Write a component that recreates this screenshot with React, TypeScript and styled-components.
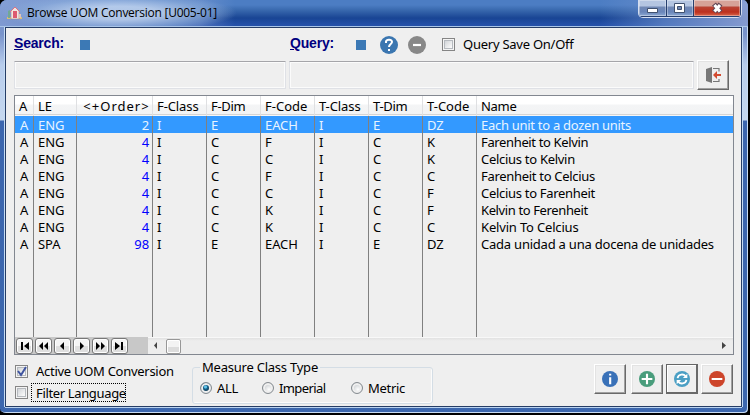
import React from "react";
import styled, { createGlobalStyle, css } from "styled-components";

const Global = createGlobalStyle`
  *, *::before, *::after { box-sizing: border-box; }
  html, body { margin: 0; background: #000; overflow: hidden; }
  body { font: 13px/17px "Noto Sans", "Open Sans", sans-serif; color: #000; }
  svg { display: block; flex: none; }
`;

const Window = styled.main`
  width: 750px;
  height: 415px;
  padding: 0 8px 8px 5px;
  overflow: hidden;
  border-radius: 7px 7px 6px 6px;
  border-right: 2px solid #000;
  border-bottom: 2px solid #000;
  box-shadow: inset -1px -1px 0 #c9dcf3;
  background:
    linear-gradient(180deg, #7f9bd0 0, #7893cb 34px, #b8cdec 65px, #c6d8ef 120px, #3c66ae 121px, #3c67ae 100%);
  display: flex;
  flex-direction: column;
`;

const TitleBar = styled.header`
  height: 27px;
  margin: 0 -8px 0 -5px;
  padding-left: 7px;
  flex: none;
  display: flex;
  border-bottom: 1px solid #a9c5e8;
  background:
    radial-gradient(ellipse 118px 19px at 119px 13px, rgba(196,215,241,.8) 0 35%, rgba(143,177,222,.5) 76%, transparent),
    linear-gradient(90deg, rgba(137,162,214,.9), rgba(137,162,214,.4) 200px, transparent 235px 600px, rgba(110,145,205,.65) 665px, rgba(143,163,213,.9)),
    linear-gradient(180deg, #4c7dc3 0 5px, #3969ae 10px, #194594 18px, #2450a9 25px);
`;
const Title = styled.h1`
  font: 12px/16px "Open Sans", sans-serif;
  letter-spacing: -.25px;
  margin: 5px 0 0 5px;
  width: 598px;
  flex: none;
  white-space: nowrap;
`;
const HouseIcon = styled.svg`margin-top: 5px; width: 15px; height: 16px;`;
const Captions = styled.div`
  width: 104px;
  height: 18px;
  margin-left: 13px;
  display: flex;
  border: 1px solid #d5def0;
  border-top: 0;
  border-radius: 0 0 5px 5px;
  overflow: hidden;
  box-shadow: inset 0 0 0 1px #263f6e;
`;
const CaptionButton = styled.button<{ $width: number; $close?: boolean }>`
  width: ${p => p.$width}px;
  border: 0;
  border-right: 1px solid #263f6e;
  border-bottom: 1px solid #263f6e;
  padding: 0;
  display: grid;
  place-items: center;
  box-shadow: inset 0 0 0 1px rgba(255,255,255,.35);
  background: ${p => p.$close
    ? "linear-gradient(#d6a298 0 6px, #b94435 7px, #bd301e 12px, #d8664b)"
    : "linear-gradient(#b4c5e1 0 6px, #7188b4 7px, #6986ba 12px, #8eaad3)"};
`;

const Content = styled.section`
  width: 737px;
  height: 380px;
  flex: none;
  background: #efefef;
  border: 1px solid #263d66;
  box-shadow: -1px 0 0 #c6dcf4, 1px 0 0 #c6dcf4, 0 1px 0 #bad3f0;
  padding-left: 8px;
`;
const Tools = styled.div`
  height: 33px;
  display: flex;
  align-items: center;
`;
const Accent = styled.label<{ $w: number }>`
  width: ${p => p.$w}px;
  padding-bottom: 2px;
  font: bold 14px/17px "Liberation Sans", Arial, sans-serif;
  color: #000080;
  letter-spacing: -.2px;
`;
const Mark = styled.i<{ $after: number }>`
  width: 10px;
  height: 10px;
  background: #3c79b5;
  margin-right: ${p => p.$after}px;
`;
const Label = styled.span<{ $spacing?: number }>`
  letter-spacing: ${p => p.$spacing ?? 0}px;
  white-space: nowrap;
`;
const QueryIcons = styled.div`display: flex; gap: 10px; margin-right: 16px;`;
const SaveOption = styled.label`display: flex; align-items: center; gap: 8px;`;
const Entries = styled.div`display: flex; align-items: center; height: 30px; margin-top: -1px;`;
const Entry = styled.div<{ $w: number; $gap: number }>`
  width: ${p => p.$w}px;
  height: 28px;
  margin-right: ${p => p.$gap}px;
  border: 1px solid #dfe1e6;
  border-top-color: #a5a5a9;
  border-radius: 1px;
  box-shadow: inset 0 0 0 1px #fbfbfb;
`;
const PushButton = styled.button<{ $focused?: boolean }>`
  width: 32px;
  height: 30px;
  padding: 0;
  background: #efefef;
  border: 1px solid ${p => (p.$focused ? "#666" : "#fff")};
  border-right-color: #696969;
  border-bottom-color: #696969;
  box-shadow: inset -1px -1px 0 ${p => (p.$focused ? "#696969" : "#a0a0a0")}, inset 1px 1px 0 ${p => (p.$focused ? "#fff" : "#e3e3e3")};
  display: grid;
  place-items: center;
`;

const TablePanel = styled.section`
  width: 720px;
  height: 260px;
  margin-top: 5px;
  border: 1px solid #828790;
`;
const columns = "19px 43px 76px repeat(6, 54px) 257px";
const cellLines = css`
  display: grid;
  grid-template-columns: ${columns};
`;
const TableHeader = styled.div`
  ${cellLines}
  height: 20px;
  background: linear-gradient(#fff 0 8px, #f4f5f6 9px, #f2f3f4 18px, #d5d5d5 18px 19px, #f6f6f6 19px);
`;
const HeaderCell = styled.div<{ $center?: boolean; $spacing?: number }>`
  border-right: 1px solid #dfe0e2;
  padding: 2px 0 0 4px;
  letter-spacing: ${p => p.$spacing ?? 0}px;
  text-align: ${p => p.$center ? "center" : "left"};
  white-space: nowrap;
  &:last-child { border: 0; }
`;
const Rows = styled.div`
  height: 221px;
  background: #efefef;
`;
const Row = styled.div<{ $selected?: boolean }>`
  ${cellLines}
  height: 17px;
  background: ${p => p.$selected ? "#3399ff" : "transparent"};
  color: ${p => p.$selected ? "#e8f4ff" : "#000"};
`;
const Cell = styled.div<{ $kind?: "first" | "number"; $selected?: boolean; $spacing?: number }>`
  border-right: 1px solid #808080;
  padding: 1px 4px 0;
  height: 100%;
  line-height: 17px;
  letter-spacing: ${p => p.$spacing ?? -.1}px;
  white-space: nowrap;
  ${p => p.$kind === "first" && css`padding-left: 5px;`}
  ${p => p.$kind === "number" && css`text-align: right; padding-right: 3px; color: ${p.$selected ? "#e8f4ff" : "#0000ff"};`}
  &:last-child { border: 0; }
`;
const EmptyRows = styled.div`
  ${cellLines}
  height: 85px;
`;
const FooterBar = styled.div`
  height: 17px;
  display: flex;
  background: #ededed;
`;
const Navigator = styled.div`
  width: 133px;
  height: 17px;
  padding: 1px;
  display: flex;
  gap: 2px;
  background: #c8c8c8;
  flex: none;
`;
const NavButton = styled.button`
  width: 17px;
  height: 16px;
  padding: 0;
  border: 1px solid #777;
  border-radius: 3px;
  box-shadow: inset 0 0 0 1px #fff;
  background: linear-gradient(#f4f4f4 50%, #dedede 51%);
  display: grid;
  place-items: center;
`;
const Scroll = styled.div`
  flex: 1;
  display: flex;
  align-items: center;
  padding: 0 6px 0 5px;
  border-top: 1px solid #f8f8f8;
  background: linear-gradient(#e2e2e2, #ededed 3px, #ededed);
`;
const Thumb = styled.i`
  width: 15px;
  height: 15px;
  border: 1px solid #979797;
  border-radius: 2px;
  box-shadow: inset 0 0 0 1px #fff;
  background: linear-gradient(#f3f3f3 50%, #dcdcdc 51%);
  margin: 0 auto 0 8px;
`;
const Bottom = styled.footer`
  height: 49px;
  display: grid;
  grid-template-columns: 178px 240px 162px auto;
`;
const CheckStack = styled.div`padding: 6px 0 0 1px;`;
const CheckLine = styled.label`
  height: 21px;
  display: flex;
  align-items: center;
`;
const Box = styled.span`
  width: 13px;
  height: 13px;
  flex: none;
  border: 1px solid #858585;
  background: linear-gradient(135deg, #c5c9ce, #f9f9f9 75%);
  box-shadow: inset 0 0 0 1px #f4f4f4, inset 0 0 0 2px #b6babf;
`;
const Caption = styled.span<{ $focused?: boolean }>`
  margin-left: ${p => p.$focused ? 3 : 8}px;
  height: 19px;
  width: ${p => p.$focused ? 95 : 145}px;
  padding-left: ${p => p.$focused ? 4 : 0}px;
  border: ${p => p.$focused ? "1px dotted #000" : "0"};
  line-height: ${p => p.$focused ? 18 : 19}px;
  letter-spacing: ${p => p.$focused ? -.35 : -.28}px;
  white-space: nowrap;
`;
const Group = styled.fieldset`
  width: 241px;
  height: 43px;
  margin: 6px 0 0;
  padding: 0;
  min-width: 0;
  border: 1px solid #d4dde5;
  border-radius: 3px;
  box-shadow: inset -1px -1px 0 #fbfbfb;
`;
const Legend = styled.legend`
  margin-left: 7px;
  padding: 0 2px;
  line-height: 13px;
  height: 13px;
  letter-spacing: -.23px;
  white-space: nowrap;
`;
const Options = styled.div`
  display: grid;
  grid-template-columns: 62px 89px 80px;
  padding-left: 7px;
  margin-top: 5px;
`;
const Option = styled.label<{ $spacing: number }>`
  display: flex;
  align-items: center;
  height: 18px;
  letter-spacing: ${p => p.$spacing}px;
`;
const Radio = styled.i<{ $on?: boolean }>`
  width: 12px;
  height: 12px;
  margin-right: 5px;
  border: 1px solid #858b90;
  border-radius: 50%;
  box-shadow: inset 0 0 0 2px #efefef;
  background: ${p => p.$on
    ? "radial-gradient(circle at 45% 40%, #65c5ea 0 1px, #16648e 2px, #123d58 4px, #c5d4df 5px)"
    : "radial-gradient(circle at 60% 65%, #fff, #aeb4b9)"};
`;
const Actions = styled.div`display: flex; padding-top: 9px; > :nth-child(2) { margin-left: 5px; } > :nth-child(n+3) { margin-left: 3px; }`;

const headers = [
  { text: "A", spacing: 0 }, { text: "LE", spacing: 0 }, { text: "<+Order>", spacing: 1 },
  { text: "F-Class", spacing: -.1 }, { text: "F-Dim", spacing: -.3 }, { text: "F-Code", spacing: 0 },
  { text: "T-Class", spacing: -.1 }, { text: "T-Dim", spacing: -.3 }, { text: "T-Code", spacing: 0 }, { text: "Name", spacing: -.3 },
];
const records = [
  ["A", "ENG", "2", "I", "E", "EACH", "I", "E", "DZ", "Each unit to a dozen units"],
  ["A", "ENG", "4", "I", "C", "F", "I", "C", "K", "Farenheit to Kelvin"],
  ["A", "ENG", "4", "I", "C", "C", "I", "C", "K", "Celcius to Kelvin"],
  ["A", "ENG", "4", "I", "C", "F", "I", "C", "C", "Farenheit to Celcius"],
  ["A", "ENG", "4", "I", "C", "C", "I", "C", "F", "Celcius to Farenheit"],
  ["A", "ENG", "4", "I", "C", "K", "I", "C", "F", "Kelvin to Ferenheit"],
  ["A", "ENG", "4", "I", "C", "K", "I", "C", "C", "Kelvin To Celcius"],
  ["A", "SPA", "98", "I", "E", "EACH", "I", "E", "DZ", "Cada unidad a una docena de unidades"],
];
const nameSpacing = [-.28, -.36, -.29, -.3, -.3, -.38, -.17, -.22];
const navPaths = [
  "M2 1h2v8H2zM10 1v8L5 5z",
  "M5 1v8L1 5zM10 1v8L6 5z",
  "M7 1v8L3 5z",
  "M4 1v8l4-4z",
  "M1 1v8l4-4zM6 1v8l4-4z",
  "M1 1v8l5-4zM7 1h2v8H7z",
];

function RoundIcon({ kind }: { kind: "info" | "plus" | "refresh" | "minus" | "help" | "disabled" }) {
  const fills = { info: "#3971b8", plus: "#499d7c", refresh: "#4b9fc4", minus: "#cd452b", help: "#3b76b0", disabled: "#888" };
  const size = kind === "help" || kind === "disabled" ? 18 : 16;
  return (
    <svg width={size} height={size} viewBox="0 0 18 18">
      <circle cx="9" cy="9" r="9" fill={fills[kind]} />
      {kind === "info" && <path d="M8 3h2.4v2H8zM8 7h2.4v8H8z" fill="#fff" />}
      {kind === "plus" && <path d="M9 3v12M3 9h12" stroke="#fff" strokeWidth="2.4" />}
      {(kind === "minus" || kind === "disabled") && <path d={kind === "minus" ? "M3 9h12" : "M5 9h8"} stroke="#fff" strokeWidth="2.2" />}
      {kind === "help" && <path d="M6 7V5.5C6.5 3 12 3 12 6c0 2-3 2-3 5M9 13v2" stroke="#fff" strokeWidth="2" fill="none" />}
      {kind === "refresh" && <><path d="M4 8c1-5 7-5 9-2M14 10c-1 5-7 5-9 2" stroke="#fff" strokeWidth="2" fill="none" /><path d="M15 3v5h-5zM3 15v-5h5z" fill="#fff" /></>}
    </svg>
  );
}

export default function App() {
  return <><Global /><Window>
    <TitleBar>
      <HouseIcon viewBox="0 0 15 16">
        <path d="M0 12h15v2H0z" fill="#d8bd73" /><path d="M1 6l2-1v8H1z" fill="#71a895" />
        <path d="M4 6l4-4 4 4v8H4z" fill="#f2e4df" stroke="#98747d" strokeWidth=".5" />
        <path d="M3 7l5-5 5 5" fill="none" stroke="#df7080" /><path d="M6 6h4v7H6z" fill="#dc5870" /><path d="M12 9h2v4h-2z" fill="#e0c3b7" />
      </HouseIcon>
      <Title>Browse UOM Conversion [U005-01]</Title>
      <Captions>
        <CaptionButton $width={28}><svg width="13" height="12"><path d="M1.5 6.5h10v4h-10z" fill="#fff" stroke="#40516f" /></svg></CaptionButton>
        <CaptionButton $width={27}><svg width="12" height="12"><path d="M.5 1.5h10v9H.5z" fill="#fff" stroke="#40516f" /><path d="M3.5 4.5h4v3h-4z" fill="#7188b4" stroke="#40516f" /></svg></CaptionButton>
        <CaptionButton $width={47} $close><svg width="13" height="12"><path d="M3 2l6.5 8M9.5 2L3 10" stroke="#634755" strokeWidth="5" /><path d="M3.5 3l5.5 6.5M9 3L3.5 9.5" stroke="#fff" strokeWidth="3" /></svg></CaptionButton>
      </Captions>
    </TitleBar>
    <Content>
      <Tools>
        <Accent $w={66}><u>S</u>earch:</Accent><Mark $after={200} />
        <Accent $w={66}><u>Q</u>uery:</Accent><Mark $after={14} />
        <QueryIcons><RoundIcon kind="help" /><RoundIcon kind="disabled" /></QueryIcons>
        <SaveOption><Box /><Label $spacing={-.25}>Query Save On/Off</Label></SaveOption>
      </Tools>
      <Entries><Entry $w={272} $gap={3} /><Entry $w={405} $gap={3} />
        <PushButton aria-label="Exit"><svg width="17" height="17" viewBox="0 0 17 17"><path d="M1 2l6-2v16l-6-2z" fill="#777" /><path d="M8 1.5h6v3M14 12v2.5H8" fill="none" stroke="#777" strokeWidth="1.2" /><path d="M8 8l4-4v3h4v2h-4v3z" fill="#d34a30" /></svg></PushButton>
      </Entries>
      <TablePanel>
        <TableHeader>{headers.map((h, i) => <HeaderCell key={h.text} $center={i === 2} $spacing={h.spacing}>{h.text}</HeaderCell>)}</TableHeader>
        <Rows>
          {records.map((r, row) => <Row key={row} $selected={row === 0}>{r.map((v, i) => <Cell key={i} $selected={row === 0} $spacing={i === 9 ? nameSpacing[row] : undefined} $kind={i === 0 ? "first" : i === 2 ? "number" : undefined}>{v}</Cell>)}</Row>)}
          <EmptyRows>{headers.map(h => <Cell key={h.text} />)}</EmptyRows>
        </Rows>
        <FooterBar><Navigator>{navPaths.map(d => <NavButton key={d}><svg width="11" height="10"><path d={d} /></svg></NavButton>)}</Navigator>
          <Scroll><svg width="5" height="8"><path d="M4 0v7L1 3.5z" fill="#444" /></svg><Thumb /><svg width="5" height="8"><path d="M0 0v7l4-3.5z" fill="#444" /></svg></Scroll>
        </FooterBar>
      </TablePanel>
      <Bottom>
        <CheckStack>
          <CheckLine><Box><svg width="11" height="11"><path d="M2 5l3 4 5-8" fill="none" stroke="#4055a0" strokeWidth="2" /></svg></Box><Caption>Active UOM Conversion</Caption></CheckLine>
          <CheckLine><Box /><Caption $focused>Filter Language</Caption></CheckLine>
        </CheckStack>
        <Group><Legend>Measure Class Type</Legend><Options>
          <Option $spacing={-.3}><Radio $on />ALL</Option><Option $spacing={-.6}><Radio />Imperial</Option><Option $spacing={-.3}><Radio />Metric</Option>
        </Options></Group><i />
        <Actions><PushButton><RoundIcon kind="info" /></PushButton><PushButton><RoundIcon kind="plus" /></PushButton><PushButton $focused><RoundIcon kind="refresh" /></PushButton><PushButton><RoundIcon kind="minus" /></PushButton></Actions>
      </Bottom>
    </Content>
  </Window></>;
}
